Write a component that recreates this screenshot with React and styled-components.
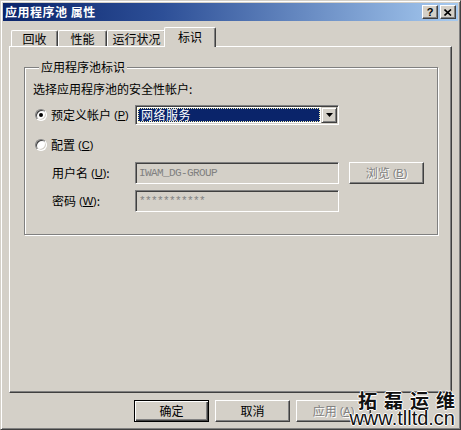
import React from "react";
import styled, { createGlobalStyle } from "styled-components";

const Global = createGlobalStyle`
  html, body { margin: 0; padding: 0; background: #d4d0c8; }
  * { box-sizing: border-box; }
`;

const face = "#d4d0c8";

const Window = styled.div`
  position: relative;
  width: 461px;
  height: 430px;
  background: ${face};
  border: 1px solid;
  border-color: ${face} #404040 #404040 ${face};
  box-shadow: inset 1px 1px #fff, inset -1px -1px #808080;
  padding: 2px;
  font-family: "Noto Sans CJK SC", "Noto Sans", sans-serif;
  font-size: 12px;
  color: #000;
  overflow: hidden;
`;

const TitleBar = styled.div`
  height: 18px;
  display: flex;
  align-items: center;
  padding: 0 2px;
  background: linear-gradient(to right, #0a246a 0%, #2d4f97 35%, #a6caf0 100%);
`;

const TitleText = styled.div`
  color: #fff;
  font-weight: bold;
  font-size: 12px;
  line-height: 14px;
  letter-spacing: 0.5px;
`;

const TitleButtons = styled.div`
  margin-left: auto;
  display: flex;
  gap: 2px;
`;

const CapButton = styled.div`
  width: 16px;
  height: 14px;
  background: ${face};
  border: 1px solid;
  border-color: #fff #404040 #404040 #fff;
  box-shadow: inset -1px -1px #808080;
  display: flex;
  align-items: center;
  justify-content: center;
  font-family: "Liberation Sans", Arial, sans-serif;
  font-weight: bold;
  font-size: 11px;
  line-height: 11px;
`;

const Body = styled.div`
  padding: 6px 6px 0 6px;
`;

const TabStrip = styled.div`
  position: relative;
  z-index: 1;
  height: 19px;
  display: flex;
  align-items: flex-end;
  padding-left: 2px;
`;

const Tab = styled.div`
  width: ${(p) => p.$w}px;
  height: ${(p) => (p.$active ? 20 : 16)}px;
  margin: ${(p) => (p.$active ? "0 -2px -1px -2px" : "0")};
  background: ${face};
  border-top: 1px solid #fff;
  border-left: 1px solid #fff;
  border-right: 1px solid #404040;
  border-radius: 2px 2px 0 0;
  box-shadow: inset -1px 0 #808080;
  display: flex;
  justify-content: center;
  padding-top: ${(p) => (p.$active ? 1 : 0)}px;
  line-height: 15px;
  white-space: nowrap;
`;

const Panel = styled.div`
  height: 347px;
  border: 1px solid;
  border-color: #fff #404040 #404040 #fff;
  box-shadow: inset -1px -1px #808080;
  padding-top: 13px;
`;

const Group = styled.fieldset`
  margin: 0 13px 0 14px;
  padding: 8px 0 22px 8px;
  border: 1px solid #808080;
  box-shadow: inset 1px 1px #fff, 1px 1px #fff;
  min-width: 0;
`;

const Legend = styled.legend`
  margin-left: 6px;
  padding: 0 2px;
  line-height: 14px;
  background: ${face};
`;

const Line = styled.div`
  line-height: 14px;
  white-space: nowrap;
`;

const Row = styled.div`
  display: flex;
  align-items: center;
  height: ${(p) => p.$h}px;
  margin-top: ${(p) => p.$mt}px;
`;

const LabelCell = styled.div`
  width: 102px;
  display: flex;
  align-items: center;
  padding-left: ${(p) => p.$indent || 0}px;
  white-space: nowrap;
  line-height: 14px;
`;

const Radio = styled.span`
  width: 12px;
  height: 12px;
  margin: 0 4px 0 2px;
  border-radius: 50%;
  background: #fff;
  border: 1px solid;
  border-color: #808080 #fff #fff #808080;
  box-shadow: inset 1px 1px #404040, inset -1px -1px ${face};
  display: flex;
  align-items: center;
  justify-content: center;
  flex-shrink: 0;

  &::after {
    content: "";
    width: 4px;
    height: 4px;
    border-radius: 50%;
    background: #000;
    display: ${(p) => (p.$checked ? "block" : "none")};
  }
`;

const Sunken = styled.div`
  width: 204px;
  height: ${(p) => p.$h}px;
  border: 1px solid;
  border-color: #808080 #fff #fff #808080;
  box-shadow: inset 1px 1px #404040, inset -1px -1px ${face};
  background: ${(p) => (p.$disabled ? face : "#fff")};
  display: flex;
  align-items: center;
  padding: 1px;
`;

const SelectValue = styled.div`
  flex: 1;
  height: 14px;
  margin: 0 1px 0 1px;
  background: #0a246a;
  border: 1px dotted #f4f0b0;
  color: #fff;
  line-height: 12px;
  padding-left: 2px;
  letter-spacing: 0.5px;
`;

const DropButton = styled.div`
  width: 16px;
  height: 16px;
  background: ${face};
  border: 1px solid;
  border-color: ${face} #404040 #404040 ${face};
  box-shadow: inset 1px 1px #fff, inset -1px -1px #808080;
  display: flex;
  align-items: center;
  justify-content: center;
`;

const EditText = styled.div`
  padding-left: 2px;
  color: #808080;
  font-family: "Liberation Mono", "DejaVu Sans Mono", monospace;
  font-size: 11px;
  letter-spacing: -0.6px;
  line-height: 14px;
`;

const Button = styled.div`
  width: 75px;
  height: 22px;
  background: ${face};
  border: 1px solid;
  border-color: ${(p) =>
    p.$default ? "#000" : `#fff #404040 #404040 #fff`};
  box-shadow: ${(p) =>
    p.$default
      ? "inset 1px 1px #fff, inset -1px -1px #404040, inset -2px -2px #808080"
      : "inset -1px -1px #808080"};
  display: flex;
  align-items: center;
  justify-content: center;
  line-height: 14px;
  color: ${(p) => (p.$disabled ? "#808080" : "#000")};
  text-shadow: ${(p) => (p.$disabled ? "1px 1px 0 #fff" : "none")};
  margin-left: ${(p) => p.$ml || 0}px;
  white-space: nowrap;
`;

const Footer = styled.div`
  display: flex;
  justify-content: flex-end;
  gap: 6px;
  margin-top: 7px;
  padding-right: 81px;
`;

const Mn = styled.span`
  font-family: "Liberation Sans", Arial, sans-serif;
  font-size: 11px;
  margin-left: 3px;
  & u { text-decoration: underline; }
`;

const Watermark = styled.div`
  position: absolute;
  right: 5px;
  top: 390px;
  display: flex;
  flex-direction: column;
  align-items: flex-end;
  color: #111;
  text-shadow: 1px 0 #fff, -1px 0 #fff, 0 1px #fff, 0 -1px #fff;
  pointer-events: none;
`;

const MarkCn = styled.div`
  font-size: 19px;
  font-weight: bold;
  letter-spacing: 7px;
  margin-right: -7px;
  line-height: 18px;
`;

const MarkUrl = styled.div`
  font-family: "Liberation Sans", Arial, sans-serif;
  font-size: 20px;
  line-height: 18px;
`;

const Mnemonic = ({ k }) => (
  <Mn>
    (<u>{k}</u>)
  </Mn>
);

const tabs = [
  { label: "回收", w: 47 },
  { label: "性能", w: 49 },
  { label: "运行状况", w: 59 },
  { label: "标识", w: 52, active: true },
];

export default function App() {
  return (
    <>
      <Global />
      <Window>
        <TitleBar>
          <TitleText>应用程序池 属性</TitleText>
          <TitleButtons>
            <CapButton>?</CapButton>
            <CapButton>
              <svg width="8" height="7" viewBox="0 0 8 7">
                <path d="M0.5 0.5 L7 6.5 M7 0.5 L0.5 6.5" stroke="#000" strokeWidth="1.6" />
              </svg>
            </CapButton>
          </TitleButtons>
        </TitleBar>
        <Body>
          <TabStrip>
            {tabs.map((t) => (
              <Tab key={t.label} $w={t.w} $active={t.active}>
                {t.label}
              </Tab>
            ))}
          </TabStrip>
          <Panel>
            <Group>
              <Legend>应用程序池标识</Legend>
              <Line>选择应用程序池的安全性帐户:</Line>
              <Row $h={20} $mt={9}>
                <LabelCell>
                  <Radio $checked />
                  预定义帐户<Mnemonic k="P" />
                </LabelCell>
                <Sunken $h={20}>
                  <SelectValue>网络服务</SelectValue>
                  <DropButton>
                    <svg width="7" height="4" viewBox="0 0 7 4">
                      <path d="M0 0 H7 L3.5 4 Z" fill="#000" />
                    </svg>
                  </DropButton>
                </Sunken>
              </Row>
              <Row $h={14} $mt={13}>
                <LabelCell>
                  <Radio />
                  配置<Mnemonic k="C" />
                </LabelCell>
              </Row>
              <Row $h={22} $mt={10}>
                <LabelCell $indent={19}>
                  用户名<Mnemonic k="U" />:
                </LabelCell>
                <Sunken $h={22} $disabled>
                  <EditText>IWAM_DG-GROUP</EditText>
                </Sunken>
                <Button $disabled $ml={10}>
                  浏览<Mnemonic k="B" />
                </Button>
              </Row>
              <Row $h={22} $mt={6}>
                <LabelCell $indent={19}>
                  密码<Mnemonic k="W" />:
                </LabelCell>
                <Sunken $h={22} $disabled>
                  <EditText>***********</EditText>
                </Sunken>
              </Row>
            </Group>
          </Panel>
          <Footer>
            <Button $default>确定</Button>
            <Button>取消</Button>
            <Button $disabled>
              应用<Mnemonic k="A" />
            </Button>
          </Footer>
        </Body>
        <Watermark>
          <MarkCn>拓磊运维</MarkCn>
          <MarkUrl>www.tlltd.cn</MarkUrl>
        </Watermark>
      </Window>
    </>
  );
}
